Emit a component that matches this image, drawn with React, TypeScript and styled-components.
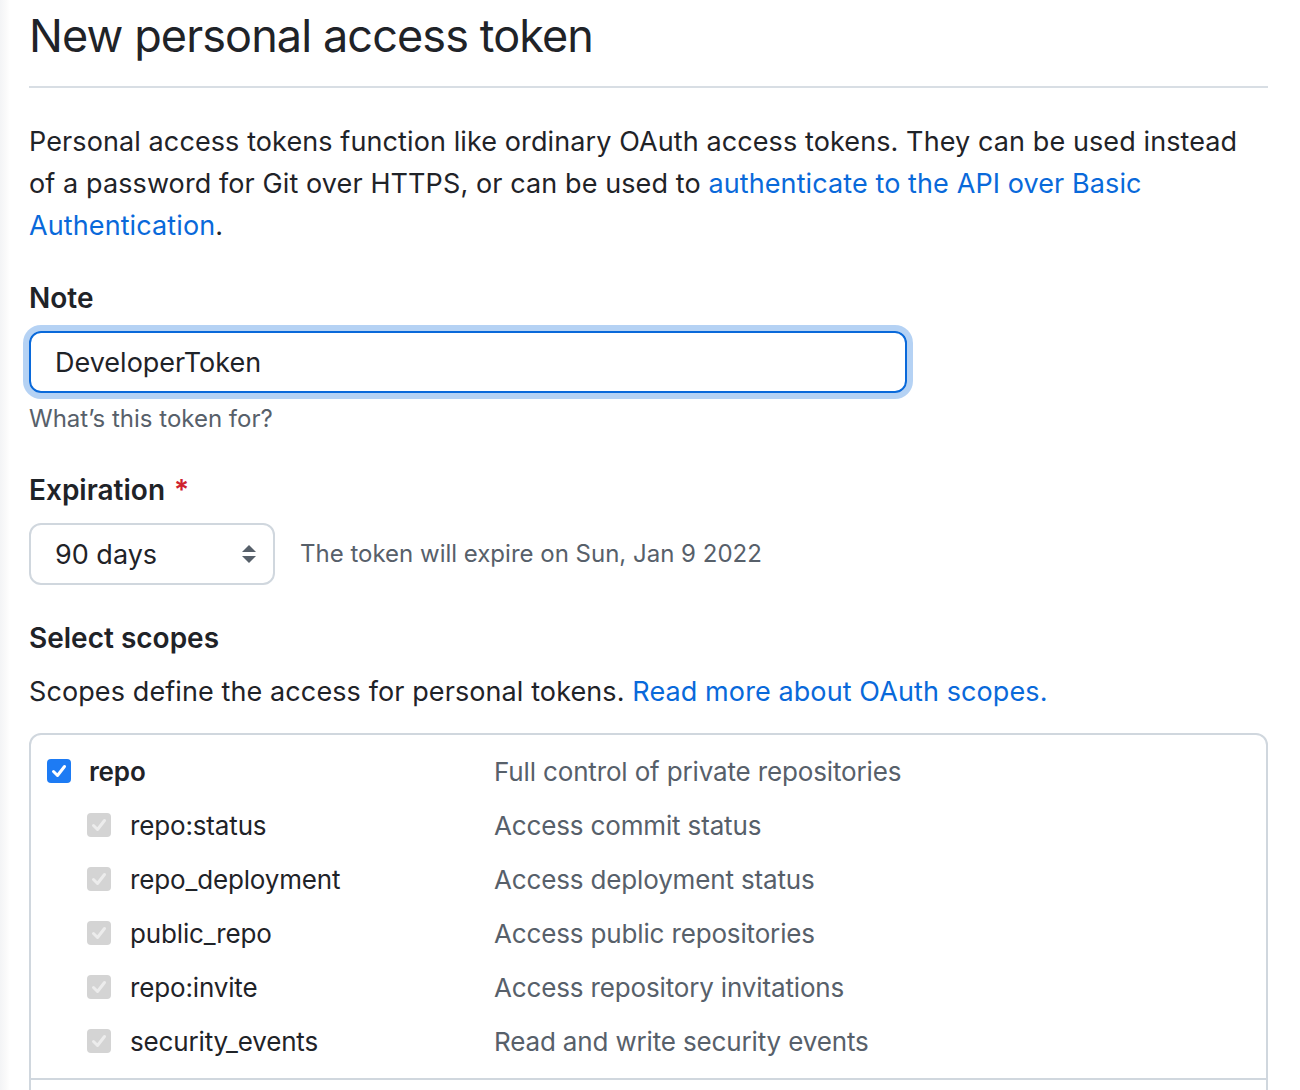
import React from "react";
import styled, { createGlobalStyle } from "styled-components";

const GlobalStyle = createGlobalStyle`
  * { box-sizing: border-box; }
  body {
    margin: 0;
    background: linear-gradient(to right, #f3f4f6 0px, #fafafa 6px, #ffffff 10px);
    font-family: Inter, "Noto Sans", "Liberation Sans", sans-serif;
    color: #1f2328;
  }
`;

interface Scope {
  name: string;
  description: string;
  child?: boolean;
}

const scopes: Scope[] = [
  { name: "repo", description: "Full control of private repositories" },
  { name: "repo:status", description: "Access commit status", child: true },
  { name: "repo_deployment", description: "Access deployment status", child: true },
  { name: "public_repo", description: "Access public repositories", child: true },
  { name: "repo:invite", description: "Access repository invitations", child: true },
  { name: "security_events", description: "Read and write security events", child: true },
];

const nextScopes: Scope[] = [
  { name: "workflow", description: "Update GitHub Action workflows" },
];

const CheckBox = ({ disabled }: { disabled?: boolean }) => (
  <Box disabled={disabled}>
    <svg width="24" height="24" viewBox="0 0 24 24">
      <polyline
        points="6.5,12.5 10.5,16.5 17.5,7.5"
        fill="none"
        stroke={disabled ? "#ececec" : "#ffffff"}
        strokeWidth="3"
        strokeLinecap="round"
        strokeLinejoin="round"
      />
    </svg>
  </Box>
);

const SelectArrows = () => (
  <svg width="16" height="20" viewBox="0 0 16 20">
    <polygon points="1,8 8,1 15,8" fill="#57606a" />
    <polygon points="1,12 8,19 15,12" fill="#57606a" />
  </svg>
);

const ScopeList = ({ items }: { items: Scope[] }) => (
  <ScopeGroup>
    {items.map((s) => (
      <ScopeRow key={s.name}>
        <ScopeName child={s.child}>
          <CheckBox disabled={s.child} />
          <ScopeLabel child={s.child}>{s.name}</ScopeLabel>
        </ScopeName>
        <ScopeDesc>{s.description}</ScopeDesc>
      </ScopeRow>
    ))}
  </ScopeGroup>
);

const App = () => {
  return (
    <>
      <GlobalStyle />
      <Page>
        <Subhead>
          <Title>New personal access token</Title>
        </Subhead>
        <Intro>
          Personal access tokens function like ordinary OAuth access tokens.
          They can be used instead of a password for Git over HTTPS, or can be
          used to <Link>authenticate to the API over Basic Authentication</Link>.
        </Intro>

        <Label gap={30}>Note</Label>
        <Input>DeveloperToken</Input>
        <Hint>What’s this token for?</Hint>

        <Label gap={32}>
          Expiration<Required>*</Required>
        </Label>
        <ExpireRow>
          <Select>
            90 days
            <SelectArrows />
          </Select>
          <Hint>The token will expire on Sun, Jan 9 2022</Hint>
        </ExpireRow>

        <Label gap={32}>Select scopes</Label>
        <ScopeText>
          Scopes define the access for personal tokens.{" "}
          <Link>Read more about OAuth scopes.</Link>
        </ScopeText>

        <ScopeTable>
          <ScopeList items={scopes} />
          <ScopeList items={nextScopes} />
        </ScopeTable>
      </Page>
    </>
  );
};

export default App;

const Page = styled.div`
  width: 1239px;
  margin-left: 29px;
  display: flex;
  flex-direction: column;
  align-items: flex-start;
`;

const Subhead = styled.div`
  width: 100%;
  margin-top: 6px;
  padding-bottom: 20px;
  border-bottom: 2px solid #d8dee4;
`;

const Title = styled.h1`
  margin: 0;
  font-size: 45px;
  line-height: 60px;
  font-weight: 400;
  letter-spacing: -0.9px;
`;

const Intro = styled.p`
  margin: 33px 0 0;
  max-width: 1225px;
  font-size: 27px;
  line-height: 42px;
  letter-spacing: 0.1px;
`;

const Link = styled.a`
  color: #0969da;
  text-decoration: none;
`;

const Label = styled.div<{ gap: number }>`
  margin-top: ${({ gap }) => gap}px;
  font-size: 28px;
  line-height: 42px;
  font-weight: 600;
`;

const Required = styled.span`
  color: #cf222e;
  margin-left: 9px;
`;

const Input = styled.div`
  margin-top: 12px;
  width: 878px;
  height: 62px;
  padding: 0 24px;
  display: flex;
  align-items: center;
  font-size: 27px;
  border: 2px solid #0969da;
  border-radius: 12px;
  box-shadow: 0 0 0 6px rgba(9, 105, 218, 0.3);
`;

const Hint = styled.div`
  margin-top: 8px;
  font-size: 24px;
  line-height: 36px;
  color: #57606a;
`;

const ExpireRow = styled.div`
  margin-top: 12px;
  display: flex;
  align-items: center;
  gap: 25px;

  ${Hint} {
    margin-top: 0;
  }
`;

const Select = styled.div`
  width: 246px;
  height: 62px;
  padding: 0 16px 0 24px;
  display: flex;
  align-items: center;
  justify-content: space-between;
  font-size: 27px;
  border: 2px solid #d0d7de;
  border-radius: 12px;
  background: #ffffff;
`;

const ScopeText = styled.div`
  margin-top: 12px;
  font-size: 27px;
  line-height: 42px;
  letter-spacing: 0.1px;
`;

const ScopeTable = styled.div`
  margin-top: 20px;
  width: 100%;
  border: 2px solid #d0d7de;
  border-radius: 12px;
`;

const ScopeGroup = styled.div`
  padding: 9px 0 10px;

  & + & {
    border-top: 2px solid #d0d7de;
  }
`;

const ScopeRow = styled.div`
  display: grid;
  grid-template-columns: 463px 1fr;
  align-items: center;
  height: 54px;
`;

const ScopeName = styled.div<{ child?: boolean }>`
  display: flex;
  align-items: center;
  padding-left: ${({ child }) => (child ? "56px" : "16px")};
`;

const Box = styled.span<{ disabled?: boolean }>`
  width: 24px;
  height: 24px;
  border-radius: 4px;
  display: flex;
  background: ${({ disabled }) => (disabled ? "#d4d4d4" : "#1d7bf4")};
`;

const ScopeLabel = styled.span<{ child?: boolean }>`
  margin-left: ${({ child }) => (child ? "19px" : "18px")};
  font-size: 26px;
  letter-spacing: -0.15px;
  font-weight: ${({ child }) => (child ? 400 : 600)};
`;

const ScopeDesc = styled.span`
  font-size: 26px;
  letter-spacing: -0.15px;
  color: #57606a;
`;
